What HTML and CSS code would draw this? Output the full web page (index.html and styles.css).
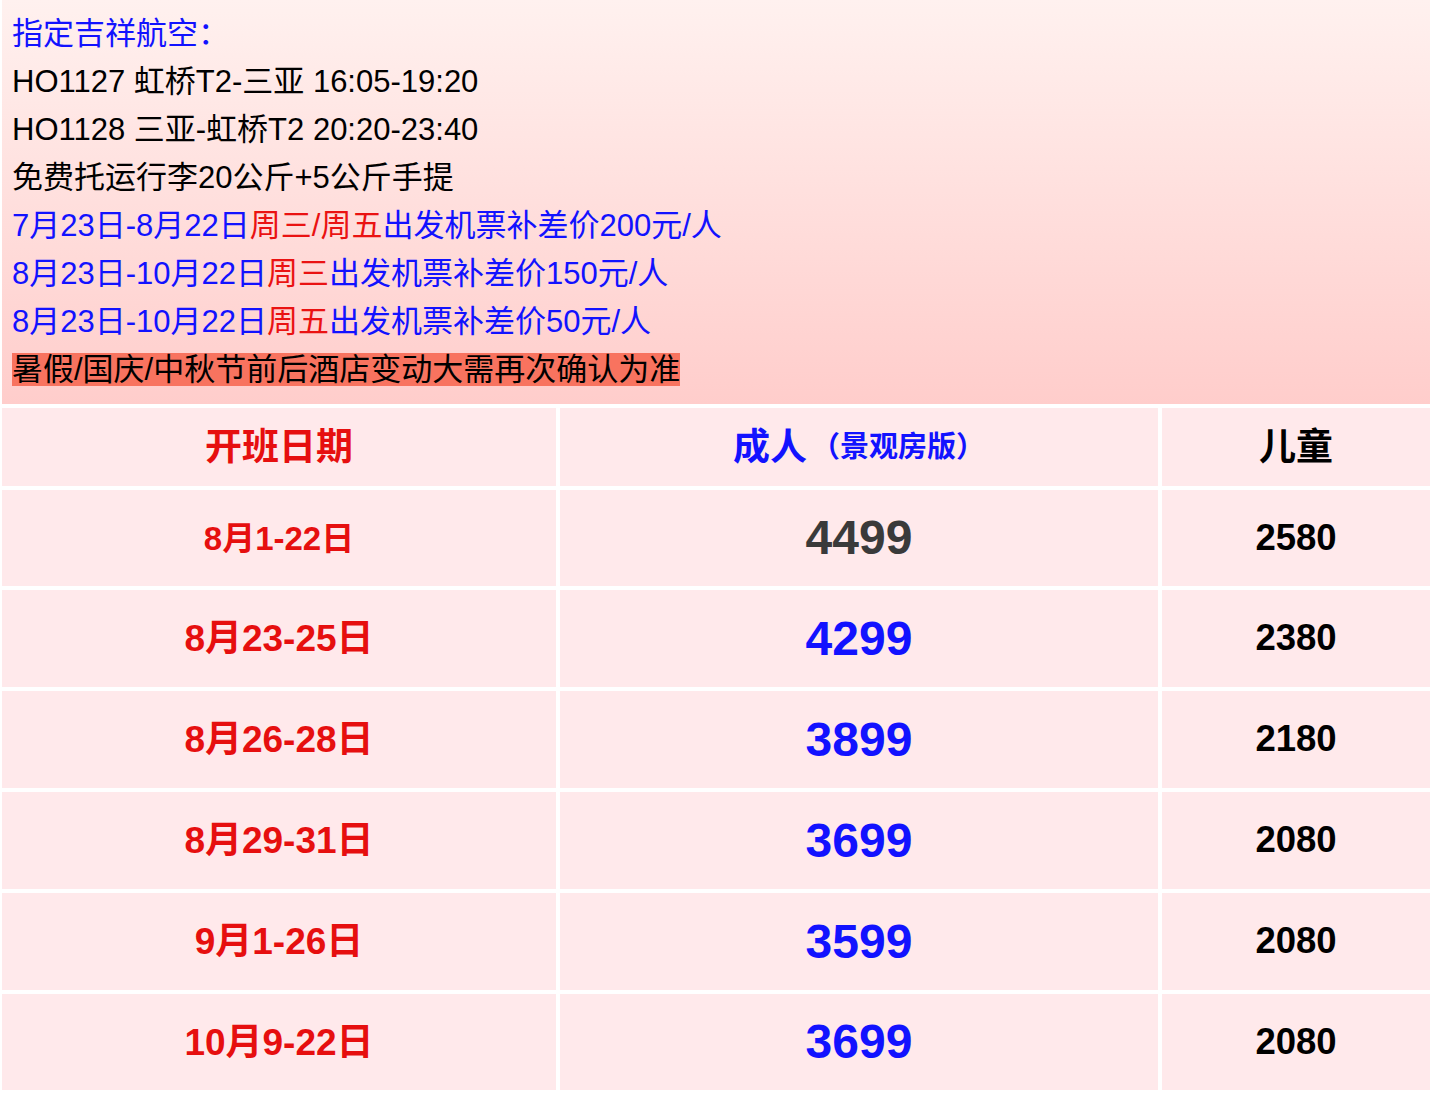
FILE: index.html
```html
<!DOCTYPE html>
<html lang="zh-CN">
<head>
<meta charset="utf-8">
<title>吉祥航空 三亚</title>
<link rel="stylesheet" href="styles.css">
</head>
<body>
<div class="page">
  <section class="notes">
    <p class="blue">指定吉祥航空：</p>
    <p>HO1127 虹桥T2-三亚 16:05-19:20</p>
    <p>HO1128 三亚-虹桥T2 20:20-23:40</p>
    <p>免费托运行李20公斤+5公斤手提</p>
    <p class="blue">7月23日-8月22日<span class="red">周三/周五</span>出发机票补差价200元/人</p>
    <p class="blue">8月23日-10月22日<span class="red">周三</span>出发机票补差价150元/人</p>
    <p class="blue">8月23日-10月22日<span class="red">周五</span>出发机票补差价50元/人</p>
    <p><span class="mark">暑假/国庆/中秋节前后酒店变动大需再次确认为准</span></p>
  </section>
  <div class="table">
    <div class="cell head c-red">开班日期</div>
    <div class="cell head c-blue">成人<span class="sub">（景观房版）</span></div>
    <div class="cell head c-black">儿童</div>

    <div class="cell date small">8月1-22日</div>
    <div class="cell price gray">4499</div>
    <div class="cell child">2580</div>

    <div class="cell date">8月23-25日</div>
    <div class="cell price">4299</div>
    <div class="cell child">2380</div>

    <div class="cell date">8月26-28日</div>
    <div class="cell price">3899</div>
    <div class="cell child">2180</div>

    <div class="cell date">8月29-31日</div>
    <div class="cell price">3699</div>
    <div class="cell child">2080</div>

    <div class="cell date">9月1-26日</div>
    <div class="cell price">3599</div>
    <div class="cell child">2080</div>

    <div class="cell date">10月9-22日</div>
    <div class="cell price">3699</div>
    <div class="cell child">2080</div>
  </div>
</div>
</body>
</html>
```

FILE: styles.css
```css
html, body {
  margin: 0;
  padding: 0;
  background: #ffffff;
}

body {
  font-family: "Liberation Sans", Arial, "Noto Sans CJK SC", sans-serif;
  color: #000;
}

.page {
  width: 1428px;
  margin-left: 2px;
}

.notes {
  background: linear-gradient(to bottom, #fff1ef 0%, #ffcdcb 100%);
  padding: 10px;
  height: 384px;
}

.notes p {
  margin: 0;
  font-size: 31px;
  line-height: 48px;
  height: 48px;
  white-space: nowrap;
}

.latin {
  font-size: 31.6px;
}

.blue { color: #1212ff; }
.red { color: #ea1212; }

.mark {
  background: #f8735f;
  color: #000;
  line-height: 33px;
  display: inline-block;
}

.table {
  margin-top: 4px;
  display: grid;
  grid-template-columns: 554px 598px 268px;
  grid-template-rows: 78px 96px 97px 97px 97px 97px 96px;
  gap: 4px;
}

.cell {
  background: #ffe9eb;
  display: flex;
  align-items: center;
  justify-content: center;
  font-weight: bold;
  white-space: nowrap;
  line-height: 1;
}

.head {
  font-size: 37px;
}

.c-red { color: #e60f0f; }
.c-blue { color: #1212ff; }
.c-black { color: #000; }

.sub {
  font-size: 29px;
  margin-left: 4px;
}

.date {
  color: #e60f0f;
  font-size: 37px;
}

.date.small {
  font-size: 33px;
}

.price {
  color: #1212ff;
  font-size: 48px;
}

.price.gray {
  color: #3a3a3a;
}

.child {
  color: #000;
  font-size: 36.5px;
}
```
